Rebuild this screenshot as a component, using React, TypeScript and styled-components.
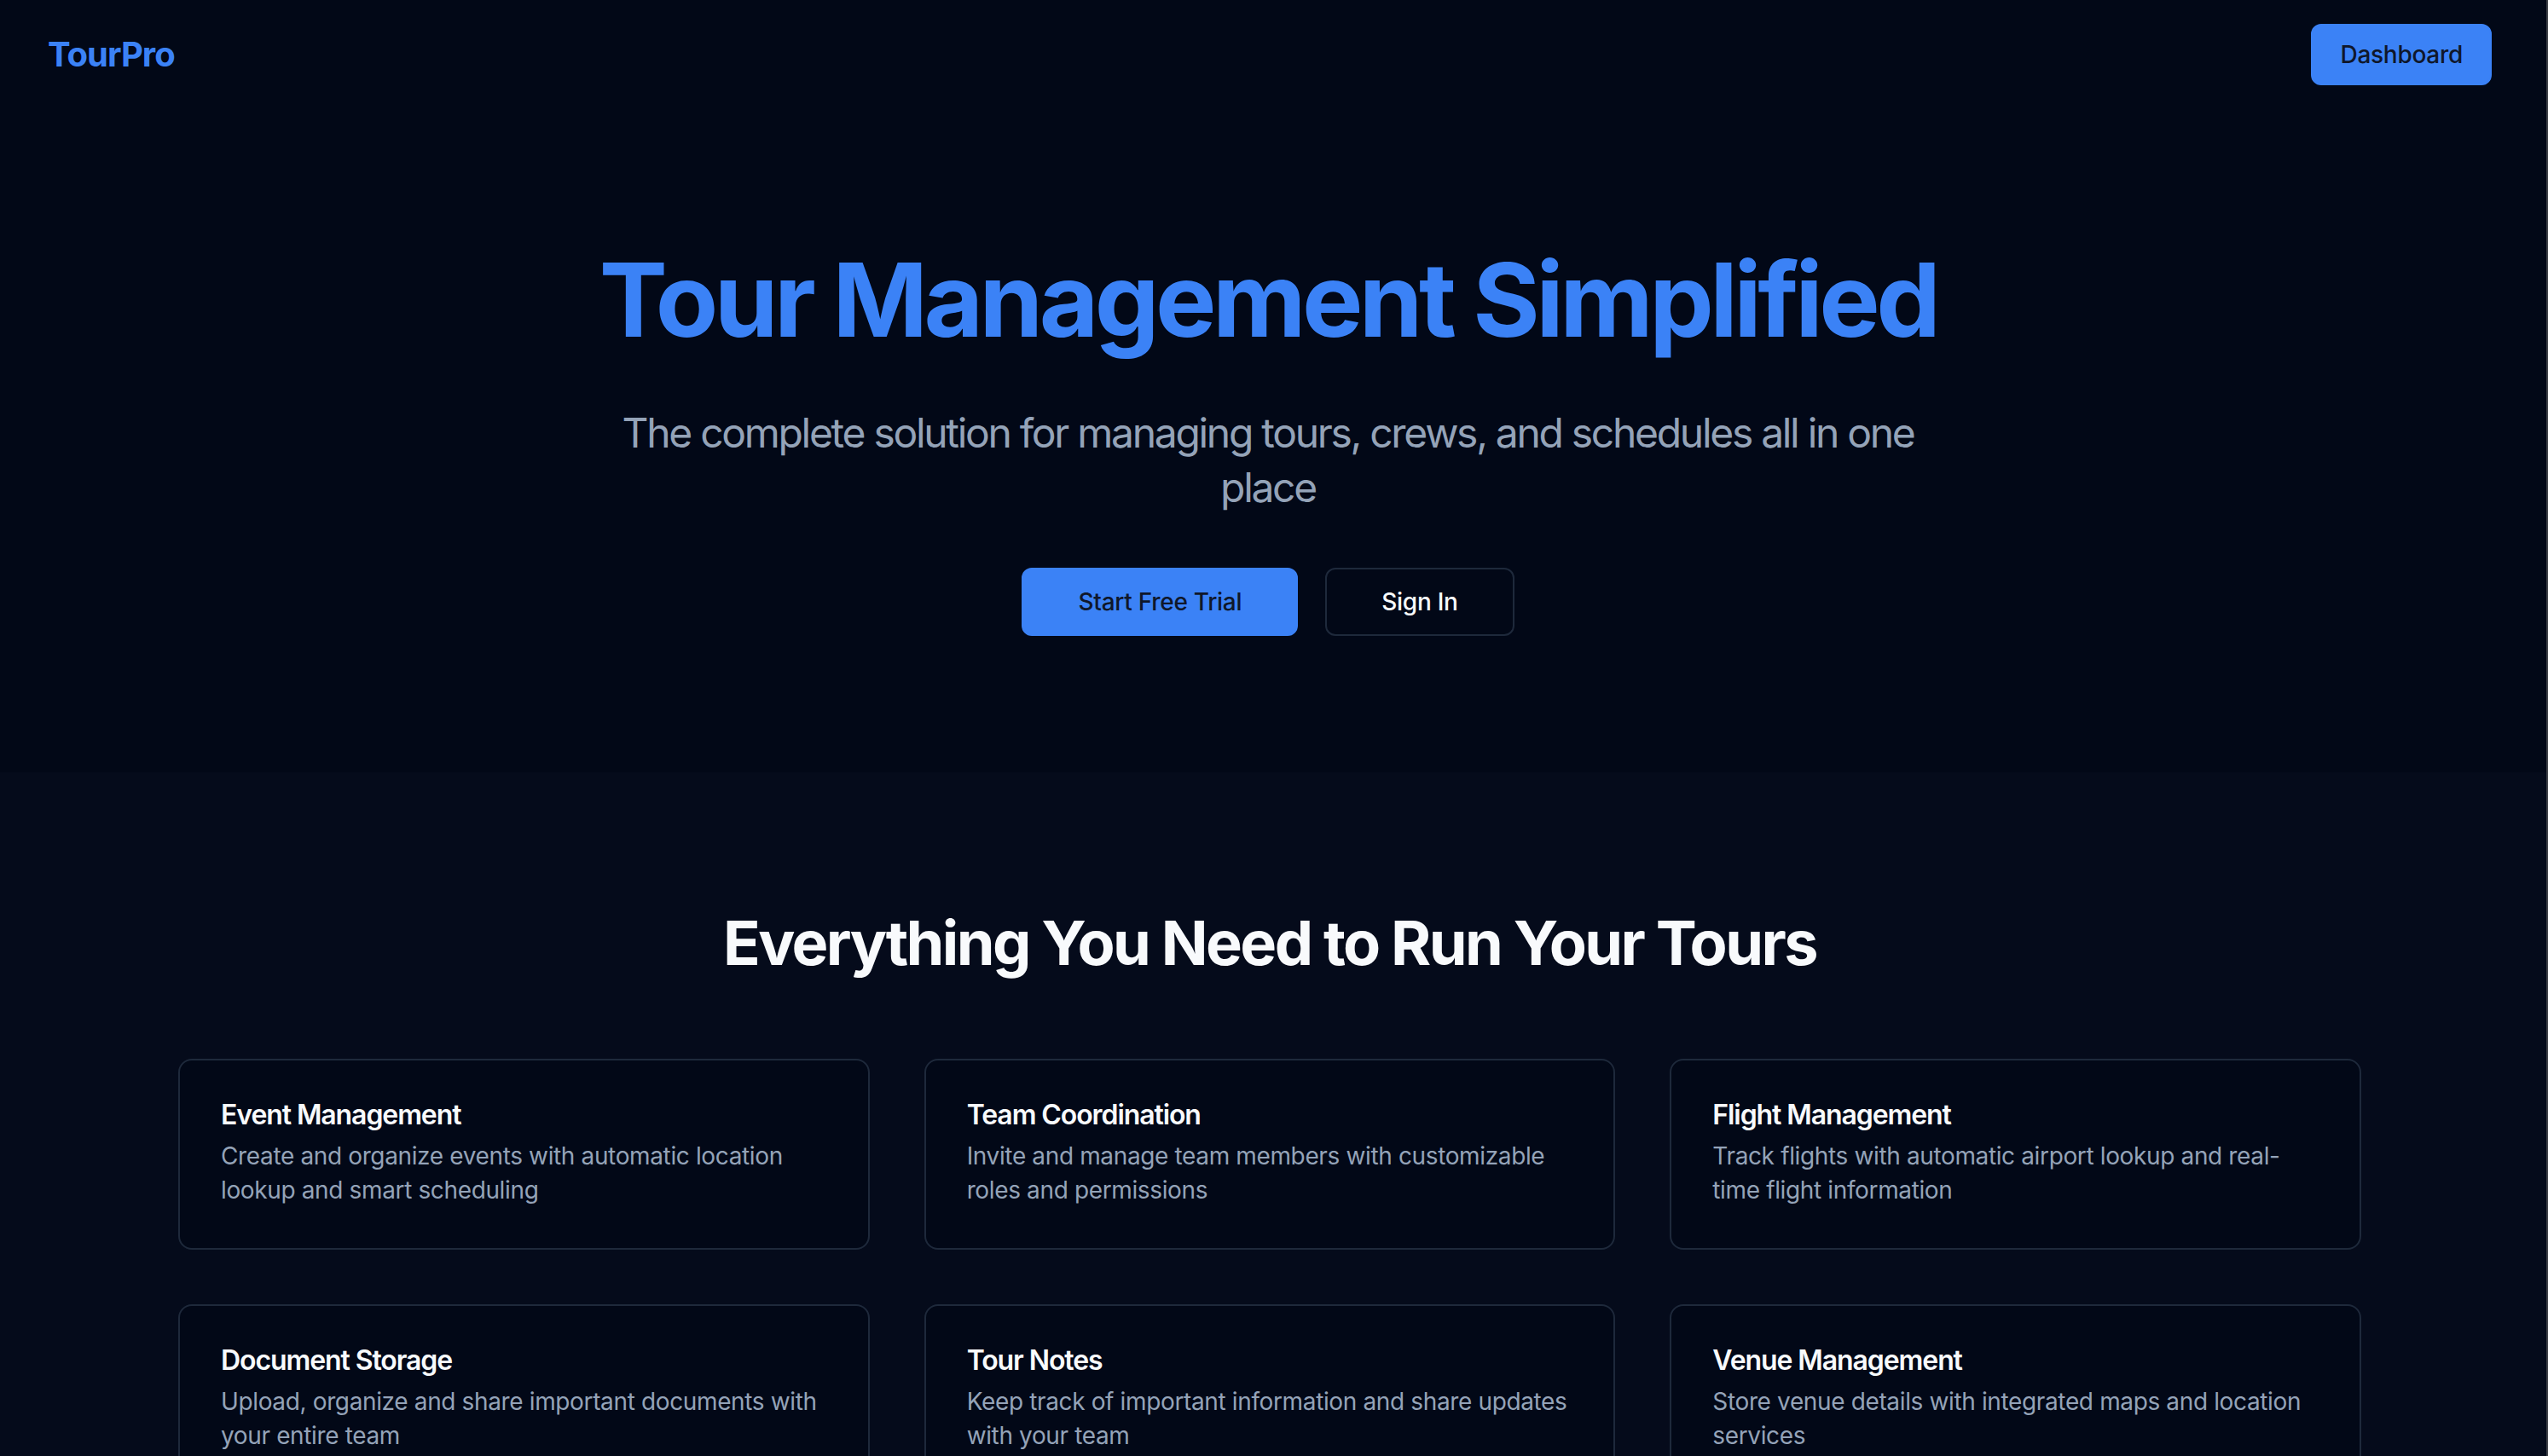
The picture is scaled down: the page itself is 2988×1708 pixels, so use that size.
import React from "react";
import styled, { createGlobalStyle } from "styled-components";

const GlobalStyle = createGlobalStyle`
  html, body {
    margin: 0;
    padding: 0;
    background: #020817;
    font-family: Inter, "Noto Sans", "Liberation Sans", sans-serif;
    -webkit-font-smoothing: antialiased;
  }
  * { box-sizing: border-box; }
`;

const Page = styled.div`
  min-height: 100vh;
  background: #020817;
  color: #f8fafc;
  border-right: 2px solid #3a3d44;
`;

const Header = styled.header`
  display: flex;
  align-items: center;
  justify-content: space-between;
  height: 127px;
  padding: 0 64px 0 56px;
`;

const Logo = styled.div`
  font-size: 40px;
  font-weight: 700;
  color: #3b82f6;
  letter-spacing: -0.025em;
`;

type BtnProps = { $variant?: "primary" | "outline"; $size?: "sm" | "lg" };

const Button = styled.button<BtnProps>`
  display: inline-flex;
  align-items: center;
  justify-content: center;
  height: ${(p) => (p.$size === "sm" ? "72px" : "80px")};
  padding: 0 ${(p) => (p.$size === "sm" ? "32px" : "64px")};
  border-radius: 12px;
  font-family: inherit;
  font-size: 28px;
  font-weight: 500;
  letter-spacing: -0.01em;
  cursor: pointer;
  border: 2px solid
    ${(p) => (p.$variant === "outline" ? "#1e293b" : "#3b82f6")};
  background: ${(p) => (p.$variant === "outline" ? "#020817" : "#3b82f6")};
  color: ${(p) => (p.$variant === "outline" ? "#f8fafc" : "#0f172a")};
`;

const Hero = styled.section`
  padding: 165px 12px 160px 0;
  text-align: center;
`;

const HeroTitle = styled.h1`
  margin: 0 0 64px;
  font-size: 120px;
  line-height: 1;
  font-weight: 700;
  letter-spacing: -0.038em;
  color: #3b82f6;
`;

const HeroSubtitle = styled.p`
  margin: 0 auto 62px;
  max-width: 1536px;
  font-size: 48px;
  line-height: 64px;
  letter-spacing: -0.048em;
  color: #94a3b8;
`;

const ButtonRow = styled.div`
  display: flex;
  justify-content: center;
  gap: 32px;
`;

const Features = styled.section`
  background: #050b1b;
  padding: 160px 8px 160px 0;
`;

const SectionTitle = styled.h2`
  margin: 0 0 96px;
  text-align: center;
  font-size: 72px;
  line-height: 80px;
  font-weight: 700;
  letter-spacing: -0.036em;
  color: #f8fafc;
`;

const Grid = styled.div`
  max-width: 2560px;
  margin: 0 auto;
  display: grid;
  grid-template-columns: repeat(3, 1fr);
  gap: 64px;
`;

const Card = styled.div`
  background: #020817;
  border: 2px solid #1e293b;
  border-radius: 16px;
  padding: 48px;
  display: flex;
  flex-direction: column;
  gap: 12px;
`;

const CardTitle = styled.h3`
  margin: 0;
  font-size: 32px;
  line-height: 1;
  font-weight: 600;
  letter-spacing: -0.034em;
  color: #f8fafc;
`;

const CardText = styled.p`
  margin: 0;
  font-size: 28px;
  line-height: 40px;
  letter-spacing: -0.013em;
  color: #94a3b8;
`;

const features = [
  {
    title: "Event Management",
    text: "Create and organize events with automatic location lookup and smart scheduling",
  },
  {
    title: "Team Coordination",
    text: "Invite and manage team members with customizable roles and permissions",
  },
  {
    title: "Flight Management",
    text: "Track flights with automatic airport lookup and real-time flight information",
  },
  {
    title: "Document Storage",
    text: "Upload, organize and share important documents with your entire team",
  },
  {
    title: "Tour Notes",
    text: "Keep track of important information and share updates with your team",
  },
  {
    title: "Venue Management",
    text: "Store venue details with integrated maps and location services",
  },
];

export default function App() {
  return (
    <>
      <GlobalStyle />
      <Page>
        <Header>
          <Logo>TourPro</Logo>
          <Button $size="sm">Dashboard</Button>
        </Header>
        <Hero>
          <HeroTitle>Tour Management Simplified</HeroTitle>
          <HeroSubtitle>
            The complete solution for managing tours, crews, and schedules all
            in one place
          </HeroSubtitle>
          <ButtonRow>
            <Button $size="lg">Start Free Trial</Button>
            <Button $size="lg" $variant="outline">
              Sign In
            </Button>
          </ButtonRow>
        </Hero>
        <Features>
          <SectionTitle>Everything You Need to Run Your Tours</SectionTitle>
          <Grid>
            {features.map((f) => (
              <Card key={f.title}>
                <CardTitle>{f.title}</CardTitle>
                <CardText>{f.text}</CardText>
              </Card>
            ))}
          </Grid>
        </Features>
      </Page>
    </>
  );
}
